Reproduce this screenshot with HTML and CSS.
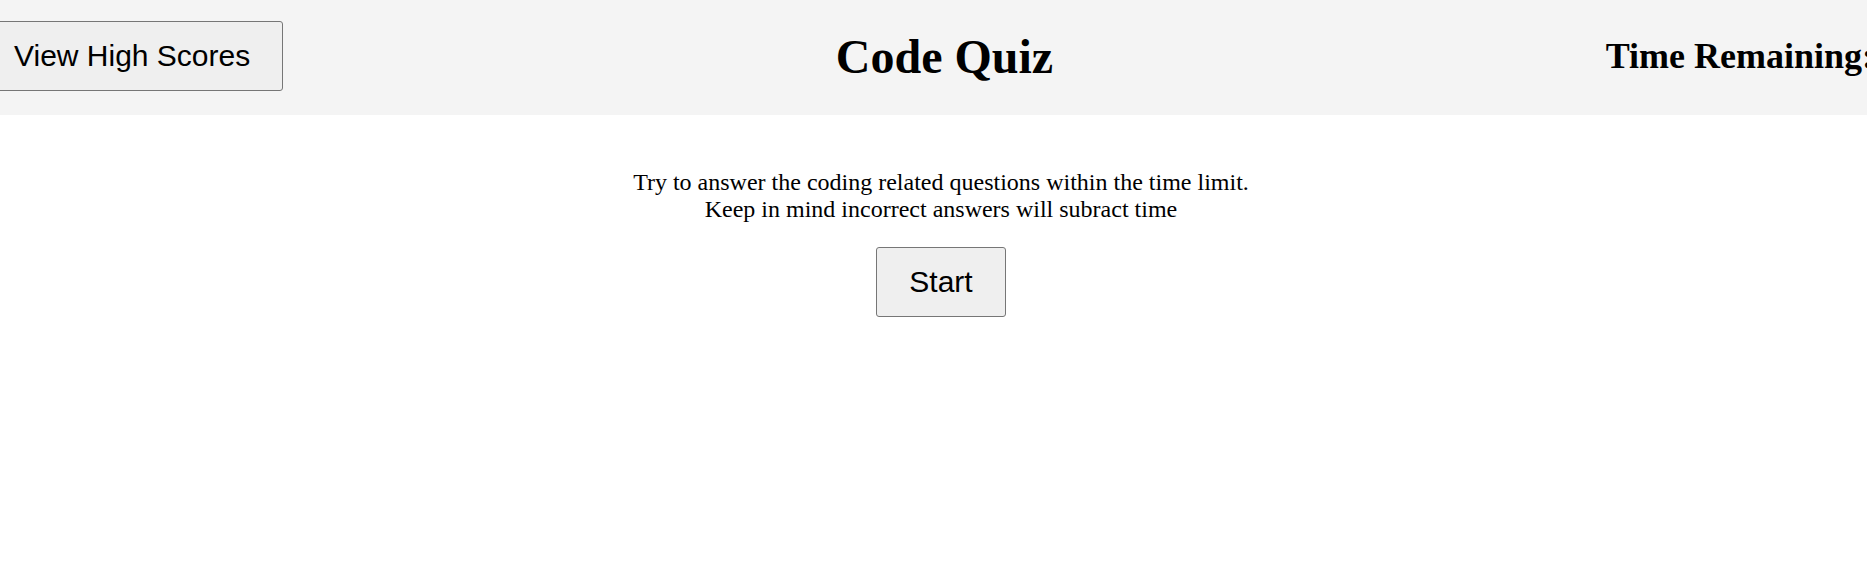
FILE: index.html
```html
<!DOCTYPE html>
<html lang="en">
<head>
<meta charset="utf-8">
<title>Code Quiz</title>
<link rel="stylesheet" href="styles.css">
</head>
<body>
<header class="topbar">
  <button class="btn">View High Scores</button>
  <h1 class="title">Code Quiz</h1>
  <h2 class="timer">Time Remaining: <span class="time"></span></h2>
</header>
<main class="intro">
  <p class="intro-text">Try to answer the coding related questions within the time limit.<br>Keep in mind incorrect answers will subract time</p>
  <button class="btn">Start</button>
</main>
</body>
</html>
```
FILE: styles.css
```css
html, body {
  margin: 0;
  padding: 0;
  overflow: hidden;
  background: #ffffff;
  font-family: "Liberation Serif", "Times New Roman", serif;
  color: #000;
}

.topbar {
  display: flex;
  justify-content: space-between;
  align-items: center;
  margin: 0 -19px;
  padding: 21px 0 24px;
  background: #f4f4f4;
}

.btn {
  font-family: "Liberation Sans", Arial, sans-serif;
  font-size: 30px;
  padding: 17px 32px;
  background: #efefef;
  color: #000;
  border: 1px solid #767676;
  border-radius: 3px;
  line-height: normal;
}

.title {
  margin: 0;
  font-size: 48px;
  font-weight: bold;
}

.timer {
  margin: 0;
  font-size: 36px;
  font-weight: bold;
  padding-right: 12px;
}

.intro {
  display: flex;
  flex-direction: column;
  align-items: center;
  padding: 54px 0 0 15px;
}

.intro-text {
  margin: 0 0 24px;
  font-size: 24px;
  text-align: center;
}
```
